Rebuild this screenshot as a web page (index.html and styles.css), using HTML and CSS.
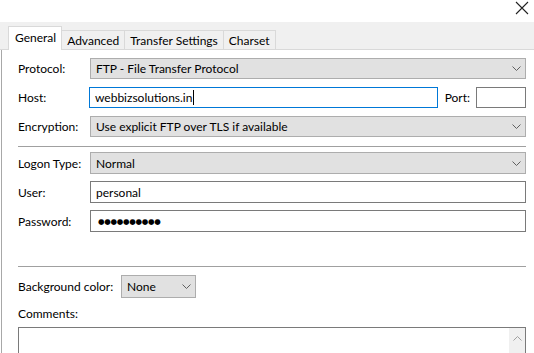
FILE: index.html
```html
<!DOCTYPE html>
<html lang="en">

<head>
    <meta charset="UTF-8">
    <title>Site Manager - General</title>
    <link rel="stylesheet" href="styles.css">
</head>

<body>
    <div class="titlebar">
        <span class="close">
            <svg width="14" height="14" viewBox="0 0 14 14">
                <path d="M1 1 L13 13 M13 1 L1 13" stroke="#222" stroke-width="1.1" fill="none"/>
            </svg>
        </span>
    </div>

    <div class="tabs">
        <div class="tab active">General</div>
        <div class="tab">Advanced</div>
        <div class="tab">Transfer Settings</div>
        <div class="tab">Charset</div>
    </div>

    <div class="panel">
        <div class="group">
            <div class="row">
                <label class="label">Protocol:</label>
                <div class="select grow">
                    <span>FTP - File Transfer Protocol</span>
                    <svg class="chevron" width="9" height="5" viewBox="0 0 9 5"><path d="M0.5 0.5 L4.5 4.5 L8.5 0.5" stroke="#606060" fill="none"/></svg>
                </div>
            </div>
            <div class="row">
                <label class="label">Host:</label>
                <div class="field grow focused">webbizsolutions.in<span class="caret"></span></div>
                <label class="port-label">Port:</label>
                <div class="field port"></div>
            </div>
            <div class="row">
                <label class="label">Encryption:</label>
                <div class="select grow">
                    <span>Use explicit FTP over TLS if available</span>
                    <svg class="chevron" width="9" height="5" viewBox="0 0 9 5"><path d="M0.5 0.5 L4.5 4.5 L8.5 0.5" stroke="#606060" fill="none"/></svg>
                </div>
            </div>
        </div>

        <hr class="sep first">

        <div class="group tight">
            <div class="row">
                <label class="label">Logon Type:</label>
                <div class="select grow">
                    <span>Normal</span>
                    <svg class="chevron" width="9" height="5" viewBox="0 0 9 5"><path d="M0.5 0.5 L4.5 4.5 L8.5 0.5" stroke="#606060" fill="none"/></svg>
                </div>
            </div>
            <div class="row">
                <label class="label">User:</label>
                <div class="field grow">personal</div>
            </div>
            <div class="row">
                <label class="label">Password:</label>
                <div class="field grow dots">●●●●●●●●●●</div>
            </div>
        </div>

        <hr class="sep second">

        <div class="row">
            <label class="bg-label">Background color:</label>
            <div class="select small">
                <span>None</span>
                <svg class="chevron" width="9" height="5" viewBox="0 0 9 5"><path d="M0.5 0.5 L4.5 4.5 L8.5 0.5" stroke="#606060" fill="none"/></svg>
            </div>
        </div>

        <div class="comments-label">Comments:</div>
        <div class="comments">
            <div class="scrollbar">
                <svg width="9" height="5" viewBox="0 0 9 5"><path d="M0.5 4.5 L4.5 0.5 L8.5 4.5" stroke="#a0a0a0" fill="none"/></svg>
            </div>
        </div>
    </div>
</body>

</html>
```

FILE: styles.css
```css
body {
    font-family: Lato, "Noto Sans", sans-serif;
    font-size: 12px;
    color: #000;
    margin: 0;
    background: #fff;
    overflow: hidden;
    height: 353px;
}

.titlebar {
    height: 22px;
    display: flex;
    justify-content: flex-end;
}

.close {
    margin: 1px 3px 0 0;
    width: 16px;
    height: 16px;
}

.tabs {
    height: 28px;
    background: #f0f0f0;
    display: flex;
    align-items: flex-end;
    padding-left: 8px;
    border-bottom: 1px solid #d9d9d9;
    box-sizing: border-box;
}

.tab {
    height: 20px;
    line-height: 19px;
    padding: 0 5px;
    border: 1px solid #d9d9d9;
    border-bottom: none;
    border-left: none;
    box-sizing: border-box;
    margin-bottom: -1px;
}

.tab.active {
    height: 24px;
    line-height: 22px;
    background: #fff;
    border-left: 1px solid #d9d9d9;
    padding: 0 5px 0 6px;
}

.panel {
    border-left: 1px solid #a8a8a8;
    margin-left: 1px;
    padding: 8px 8px 0 16px;
    height: 303px;
    box-sizing: border-box;
    display: flex;
    flex-direction: column;
}

.group {
    display: flex;
    flex-direction: column;
    gap: 8px;
}

.group.tight {
    gap: 7px;
}

.group.tight .select,
.group.tight .field {
    height: 22px;
}

.row {
    display: flex;
    align-items: center;
}

.label {
    width: 72px;
    flex-shrink: 0;
}

.grow {
    flex: 1;
}

.select {
    height: 21px;
    box-sizing: border-box;
    background: #e1e1e1;
    border: 1px solid #adadad;
    display: flex;
    align-items: center;
    justify-content: space-between;
    padding: 0 3px 0 5px;
}

.chevron {
    margin-right: 1px;
}

.field {
    height: 21px;
    box-sizing: border-box;
    border: 1px solid #7a7a7a;
    background: #fff;
    display: flex;
    align-items: center;
    padding: 0 5px;
}

.field.focused {
    border-color: #0078d7;
    margin-left: -1px;
    padding-left: 5px;
}

.caret {
    display: inline-block;
    width: 1px;
    height: 15px;
    background: #000;
    margin-left: 1px;
}

.port-label {
    margin: 0 6px 0 7px;
}

.field.port {
    width: 50px;
}

.dots {
    font-family: "DejaVu Sans", sans-serif;
    font-size: 7.5px;
    letter-spacing: -0.3px;
    padding-left: 7px;
}

.sep {
    border: none;
    border-top: 1px solid #a0a0a0;
    margin: 0;
}

.sep.first {
    margin: 9px 0 5px;
}

.sep.second {
    margin: 34px 0 8px;
}

.bg-label {
    width: 103px;
    flex-shrink: 0;
}

.select.small {
    width: 75px;
    height: 23px;
}

.comments-label {
    margin-top: 6px;
    height: 20px;
    line-height: 20px;
}

.comments {
    margin-top: 3px;
    flex: 1;
    border: 1px solid #7a7a7a;
    border-bottom: none;
    display: flex;
    justify-content: flex-end;
}

.scrollbar {
    width: 16px;
    background: #f0f0f0;
    display: flex;
    justify-content: center;
    padding-top: 8px;
    box-sizing: border-box;
}
```
